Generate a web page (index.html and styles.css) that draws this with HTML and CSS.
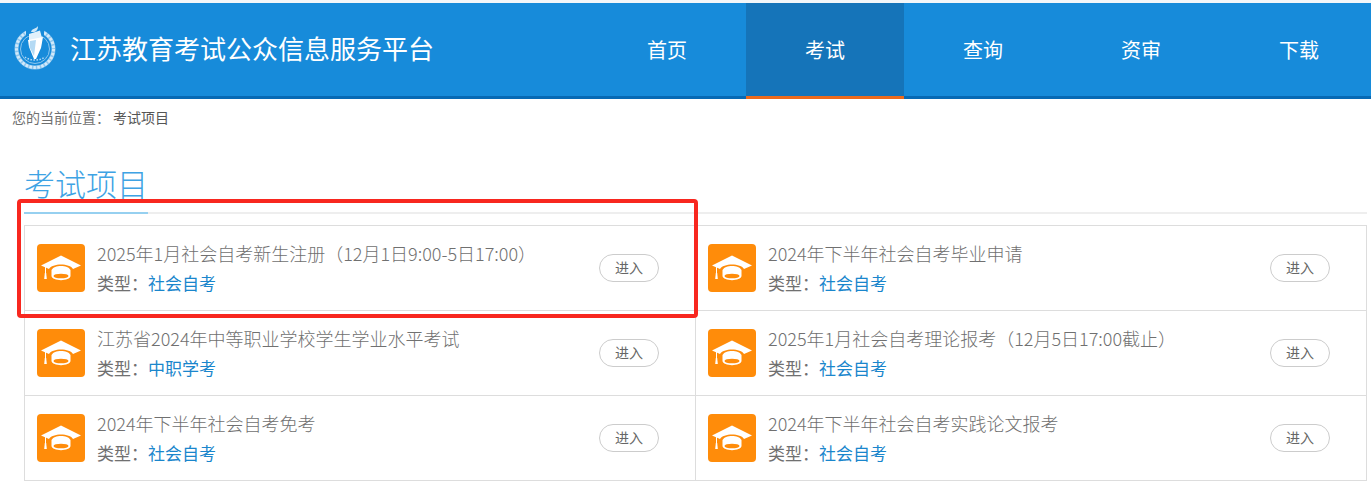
FILE: index.html
```html
<!DOCTYPE html>
<html lang="zh-CN">
<head>
    <meta charset="UTF-8">
    <meta name="viewport" content="width=device-width, initial-scale=1.0">
    <title>江苏教育考试公众信息服务平台</title>
    <link rel="stylesheet" href="styles.css">
</head>
<body>
    <!-- Shared icon -->
    <svg class="icon-defs" aria-hidden="true">
        <symbol id="cap" viewBox="0 0 48 48">
            <path d="M24 11.500 L44 21.500 L36 25 C33 19 15 19 12 25 L4 21.500 Z" fill="#fff"/>
            <path d="M8.500 22 V31" stroke="#fff" stroke-width="1"/>
            <path d="M7.800 29 h1.400 l.6 6 h-2.600 z" fill="#fff"/>
            <path d="M14.500 26 C17 20.500 31 20.500 33.500 26 V32 C33 37.500 15 37.500 14.500 32 Z" fill="#fff"/>
            <ellipse cx="24" cy="32" rx="7.500" ry="2.300" fill="#ff8c0a"/>
        </symbol>
    </svg>

    <!-- Header -->
    <header class="header">
        <a class="brand" href="#">
            <svg class="brand-logo" viewBox="0 0 44 46" aria-hidden="true">
                <circle cx="22" cy="24" r="18.500" fill="none" stroke="#8dc6ee" stroke-width="4"/>
                <circle cx="22" cy="24" r="18.500" fill="none" stroke="#d3e9f9" stroke-width="3" stroke-dasharray="2.500 1.500"/>
                <circle cx="22" cy="24" r="14.500" fill="none" stroke="#8dc6ee" stroke-width="1"/>
                <path d="M13 0 H31 V11 H13 Z" fill="#178bda"/>
                <path d="M16 9 L27 5.500 L29 13 L16 16 Z" fill="#e2f1fb"/>
                <path d="M15 15 L30 12 L28 23 L23 34 L21 34 L16 22 Z" fill="#fff"/>
                <path d="M17 16 L23 15 L21 31 L16.500 22 Z" fill="#b4daf4"/>
                <path d="M18 7 C19 3 23 4 25 1 C25 5 23 7 20 7 Z" fill="#cfe7f8"/>
                <path d="M12 32 C17 36 27 36 32 32" fill="none" stroke="#b9dcf5" stroke-width="1.500" stroke-dasharray="1.500 1.500"/>
            </svg>
            <span>江苏教育考试公众信息服务平台</span>
        </a>
        <nav class="nav">
            <a href="#">首页</a>
            <a href="#" class="active">考试</a>
            <a href="#">查询</a>
            <a href="#">资审</a>
            <a href="#">下载</a>
        </nav>
    </header>

    <!-- Breadcrumb -->
    <div class="breadcrumb">
        <span>您的当前位置：</span>
        <span class="current">考试项目</span>
    </div>

    <!-- Exam list -->
    <main class="main">
        <div class="title-bar">
            <h1>考试项目</h1>
        </div>
        <div class="exam-list">
            <div class="exam marked">
                <svg class="exam-icon"><use href="#cap"/></svg>
                <div class="exam-info">
                    <h2>2025年1月社会自考新生注册（12月1日9:00-5日17:00）</h2>
                    <p>类型：<a href="#">社会自考</a></p>
                </div>
                <button class="enter">进入</button>
            </div>
            <div class="exam">
                <svg class="exam-icon"><use href="#cap"/></svg>
                <div class="exam-info">
                    <h2>2024年下半年社会自考毕业申请</h2>
                    <p>类型：<a href="#">社会自考</a></p>
                </div>
                <button class="enter">进入</button>
            </div>
            <div class="exam">
                <svg class="exam-icon"><use href="#cap"/></svg>
                <div class="exam-info">
                    <h2>江苏省2024年中等职业学校学生学业水平考试</h2>
                    <p>类型：<a href="#">中职学考</a></p>
                </div>
                <button class="enter">进入</button>
            </div>
            <div class="exam">
                <svg class="exam-icon"><use href="#cap"/></svg>
                <div class="exam-info">
                    <h2>2025年1月社会自考理论报考（12月5日17:00截止）</h2>
                    <p>类型：<a href="#">社会自考</a></p>
                </div>
                <button class="enter">进入</button>
            </div>
            <div class="exam">
                <svg class="exam-icon"><use href="#cap"/></svg>
                <div class="exam-info">
                    <h2>2024年下半年社会自考免考</h2>
                    <p>类型：<a href="#">社会自考</a></p>
                </div>
                <button class="enter">进入</button>
            </div>
            <div class="exam">
                <svg class="exam-icon"><use href="#cap"/></svg>
                <div class="exam-info">
                    <h2>2024年下半年社会自考实践论文报考</h2>
                    <p>类型：<a href="#">社会自考</a></p>
                </div>
                <button class="enter">进入</button>
            </div>
        </div>
    </main>
</body>
</html>
```
FILE: styles.css
```css
/* General Styles */
* {
    box-sizing: border-box;
}
body {
    margin: 0;
    font-family: "Noto Sans CJK SC", sans-serif;
    color: #707070;
    background: #fff;
    overflow-x: hidden;
}
a {
    text-decoration: none;
}
.icon-defs {
    display: none;
}

/* Header */
.header {
    display: flex;
    height: 99px;
    border-top: 3px solid #f3f6f9;
    background: #178bda;
    overflow: hidden;
}
.brand {
    flex: 0 0 588px;
    display: flex;
    align-items: center;
    gap: 13px;
    padding: 0 0 4px 13px;
    border-bottom: 3px solid #0769b4;
    color: #fff;
    font-size: 26px;
}
.brand-logo {
    width: 44px;
    height: 46px;
}
.nav {
    flex: 1;
    display: flex;
    border-bottom: 3px solid #0769b4;
}
.nav a {
    flex: 0 0 158px;
    height: 96px;
    border-bottom: 3px solid #0769b4;
    color: #fff;
    font-size: 20px;
    line-height: 93px;
    text-align: center;
}
.nav a.active {
    background: #1574b9;
    border-bottom-color: #ec6a1c;
}

/* Breadcrumb */
.breadcrumb {
    display: flex;
    gap: 3px;
    padding: 7px 12px;
    font-size: 14px;
    line-height: 22px;
}
.breadcrumb .current {
    color: #555;
}

/* Title */
.main {
    padding: 26px 4px 0 24px;
}
.title-bar {
    display: flex;
    border-bottom: 2px solid #eee;
}
.title-bar h1 {
    margin: 0 0 -2px;
    padding-bottom: 8px;
    border-bottom: 2px solid #96d0f0;
    color: #3ea3e4;
    font-size: 31px;
    font-weight: 300;
    line-height: 43px;
}

/* Exam List */
.exam-list {
    display: grid;
    grid-template-columns: 1fr 1fr;
    margin-top: 11px;
    border-top: 1px solid #ddd;
    border-left: 1px solid #ddd;
}
.exam {
    position: relative;
    display: flex;
    align-items: center;
    gap: 12px;
    padding: 12px 36px 12px 12px;
    border-right: 1px solid #ddd;
    border-bottom: 1px solid #ddd;
}
.marked::after {
    content: "";
    position: absolute;
    inset: -27px -3px -8px -8px;
    border: 4px solid #f8271f;
    border-radius: 4px;
    z-index: 1;
}
.exam-icon {
    flex: none;
    width: 48px;
    height: 48px;
    border-radius: 4px;
    background: #ff8c0a;
}
.exam-info {
    flex: 1;
}
.exam-info h2,
.exam-info p {
    margin: 0;
    font-size: 18px;
    font-weight: 300;
    line-height: 30px;
}
.exam-info p {
    font-size: 17px;
    font-weight: 400;
}
.exam-info a {
    color: #1a86cc;
}
.enter {
    width: 60px;
    height: 28px;
    padding: 0 0 2px;
    border: 1px solid #ccc;
    border-radius: 14px;
    background: #fff;
    color: #666;
    font-family: inherit;
    font-size: 14px;
}
```
